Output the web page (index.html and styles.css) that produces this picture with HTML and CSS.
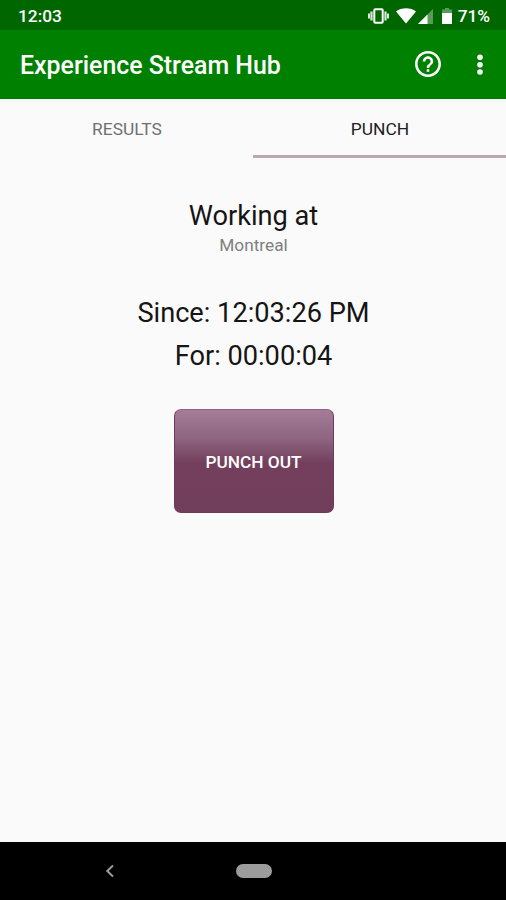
FILE: index.html
```
<!DOCTYPE html>
<html lang="en">
<head>
    <meta charset="UTF-8">
    <meta name="viewport" content="width=device-width, initial-scale=1.0">
    <title>Experience Stream Hub</title>
    <link rel="stylesheet" href="styles.css">
</head>
<body>
    <div class="status-bar">
        <span class="clock">12:03</span>
        <div class="status-icons">
            <svg class="vibrate" width="21" height="16" viewBox="0 0 21 16">
                <rect x="6.3" y="1.3" width="8.4" height="13.4" rx="1" fill="none" stroke="#fff" stroke-width="2"/>
                <path d="M3.5 3.5v9M17.5 3.5v9" stroke="#fff" stroke-opacity=".85" stroke-width="2.2"/>
                <path d="M1 5.5v5M20 5.5v5" stroke="#fff" stroke-opacity=".85" stroke-width="2"/>
            </svg>
            <svg class="wifi" width="20" height="16" viewBox="0 0 20 16">
                <path d="M0 3.6C5.5-.8 14.5-.8 20 3.6L10 15.5z" fill="#fff"/>
            </svg>
            <svg class="signal" width="15" height="15" viewBox="0 0 15 15">
                <path d="M0 15L15 0v15z" fill="#fff" fill-opacity=".35"/>
                <path d="M0 15L9.5 5.5V15z" fill="#fff"/>
            </svg>
            <svg class="battery" width="10" height="16" viewBox="0 0 10 16">
                <path d="M3 0h4v1.6h3V5H0V1.6h3z" fill="#fff" fill-opacity=".35"/>
                <path d="M0 5h10v11H0z" fill="#fff"/>
            </svg>
            <span class="percent">71%</span>
        </div>
    </div>

    <div class="app-bar">
        <h1>Experience Stream Hub</h1>
        <svg class="help" width="26" height="26" viewBox="2 2 20 20">
            <path fill="#fff" d="M11 18h2v-2h-2v2zm1-16C6.48 2 2 6.48 2 12s4.48 10 10 10 10-4.48 10-10S17.52 2 12 2zm0 18c-4.41 0-8-3.59-8-8s3.59-8 8-8 8 3.59 8 8-3.59 8-8 8zm0-14c-2.21 0-4 1.79-4 4h2c0-1.1.9-2 2-2s2 .9 2 2c0 2-3 1.75-3 5h2c0-2.25 3-2.5 3-5 0-2.21-1.79-4-4-4z"/>
        </svg>
        <svg class="more" width="6" height="21" viewBox="0 0 6 21">
            <circle cx="3" cy="3.3" r="2.8" fill="#fff"/>
            <circle cx="3" cy="10.7" r="2.8" fill="#fff"/>
            <circle cx="3" cy="18" r="2.8" fill="#fff"/>
        </svg>
    </div>

    <div class="tabs">
        <div class="tab">RESULTS</div>
        <div class="tab active">PUNCH</div>
    </div>

    <div class="content">
        <div class="working">Working at</div>
        <div class="place">Montreal</div>
        <div class="since">Since: 12:03:26 PM</div>
        <div class="elapsed">For: 00:00:04</div>
        <button class="punch-button">PUNCH OUT</button>
    </div>

    <div class="nav-bar">
        <svg class="back" width="10" height="14" viewBox="0 0 10 14">
            <path d="M8 1.5L2.3 7 8 12.5" fill="none" stroke="#9c9c9c" stroke-width="2"/>
        </svg>
        <div class="home"></div>
    </div>
</body>
</html>
```
FILE: styles.css
```
* {
    box-sizing: border-box;
}

body {
    margin: 0;
    height: 900px;
    display: flex;
    flex-direction: column;
    overflow: hidden;
    background: #fafafa;
    font-family: Roboto, "Liberation Sans", sans-serif;
    color: #151515;
}

.status-bar {
    height: 30px;
    padding: 2px 16px 0 18px;
    display: flex;
    align-items: center;
    justify-content: space-between;
    background: #006700;
    color: #fff;
    font-size: 17.3px;
    font-weight: 500;
}

.status-icons {
    display: flex;
    align-items: center;
}

.wifi {
    margin-left: 7px;
}

.signal {
    margin-left: 2px;
}

.battery {
    margin: 0 6px 0 9px;
}

.app-bar {
    height: 69px;
    padding: 0 23px 0 20px;
    display: flex;
    align-items: center;
    background: #008000;
    border-bottom: 1px solid #087508;
    color: #fff;
}

.app-bar h1 {
    flex: 1;
    margin: 4px 0 0;
    font-size: 24.9px;
    line-height: 30px;
    font-weight: 500;
    white-space: nowrap;
}

.help {
    margin-right: 36px;
}

.tabs {
    height: 59px;
    display: flex;
    background: linear-gradient(#eef4ee, #fafafa 4px);
}

.tab {
    flex: 1;
    padding: 1px 0 0 1px;
    text-align: center;
    font-size: 17.4px;
    line-height: 58px;
    color: #707070;
}

.tab.active {
    border-bottom: 3px solid #bda5b1;
    color: #202020;
}

.content {
    flex: 1;
    display: flex;
    flex-direction: column;
    align-items: center;
    padding: 42px 0 0 1px;
    font-size: 27.2px;
    line-height: 32px;
}

.place {
    margin-top: 1px;
    font-size: 17.3px;
    line-height: 24px;
    color: #808080;
}

.since {
    margin-top: 40px;
}

.elapsed {
    margin-top: 11px;
}

.punch-button {
    width: 160px;
    height: 104px;
    margin-top: 37px;
    padding: 1px 0 0;
    border: 1px solid #6e3a58;
    border-top-color: #8d6580;
    border-radius: 7px;
    background: linear-gradient(#a67c98 0%, #8d6580 28%, #733f5d 52%, #713e5a 100%);
    color: #fff;
    font-family: inherit;
    font-size: 17.3px;
    font-weight: 500;
}

.nav-bar {
    height: 58px;
    padding: 0 234px 0 105px;
    display: flex;
    align-items: center;
    justify-content: space-between;
    background: #000;
}

.home {
    width: 36px;
    height: 14px;
    border-radius: 7px;
    background: #9c9c9c;
}
```
